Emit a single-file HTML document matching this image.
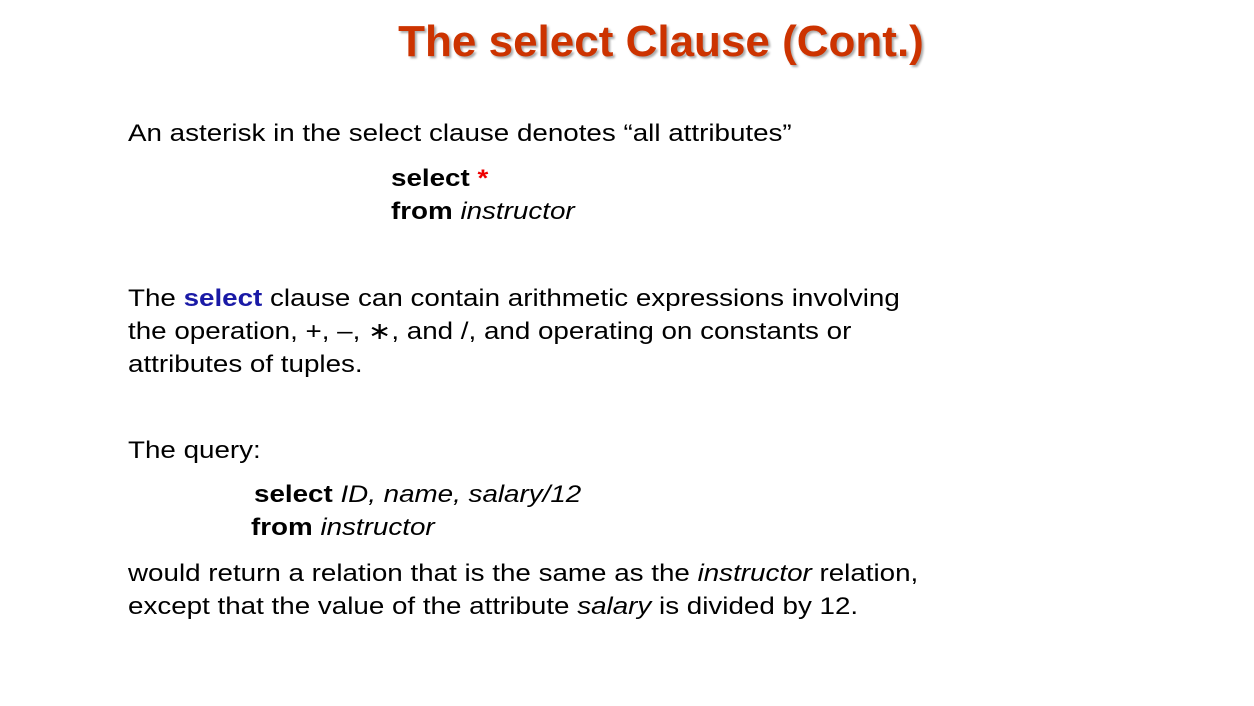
<!DOCTYPE html>
<html><head><meta charset="utf-8"><style>
body{margin:0;width:1254px;height:706px;background:#fff;position:relative;overflow:hidden;font-family:"Liberation Sans",sans-serif;}
.t{position:absolute;left:0;width:1322px;text-align:center;top:17px;font-size:44px;line-height:50px;font-weight:bold;color:#cc3300;text-shadow:2px 2px 2px #aaa;font-family:"Liberation Sans",sans-serif;}
.l{position:absolute;font-size:24px;line-height:33px;white-space:nowrap;color:#000;font-family:"Liberation Sans",sans-serif;transform:scaleX(1.157);transform-origin:0 0;}
b.s{color:#1a1aa6}
</style></head><body>
<div class="t">The select Clause (Cont.)</div>
<div class="l" style="left:128px;top:117px">An asterisk in the select clause denotes “all attributes”</div>
<div class="l" style="left:391px;top:162px"><b>select</b> <b style="color:#e00">*</b></div>
<div class="l" style="left:391px;top:195px"><b>from</b> <i>instructor</i></div>
<div class="l" style="left:128px;top:282px">The <b class="s">select</b> clause can contain arithmetic expressions involving</div>
<div class="l" style="left:128px;top:315px">the operation, +, –, ∗, and /, and operating on constants or</div>
<div class="l" style="left:128px;top:348px">attributes of tuples.</div>
<div class="l" style="left:128px;top:434px">The query:</div>
<div class="l" style="left:254px;top:478px"><b>select</b> <i>ID, name, salary/12</i></div>
<div class="l" style="left:251px;top:511px"><b>from</b> <i>instructor</i></div>
<div class="l" style="left:128px;top:557px">would return a relation that is the same as the <i>instructor</i> relation,</div>
<div class="l" style="left:128px;top:590px">except that the value of the attribute <i>salary</i> is divided by 12.</div>
</body></html>
